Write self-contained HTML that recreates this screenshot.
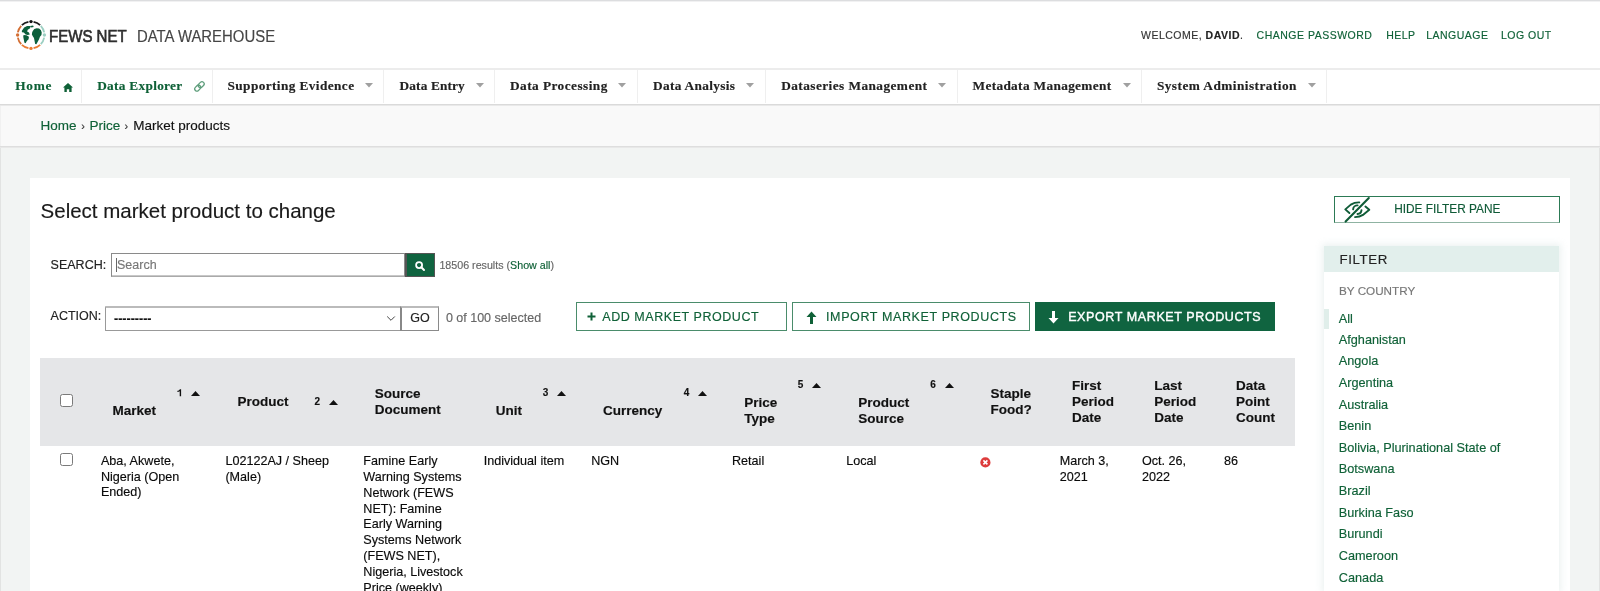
<!DOCTYPE html>
<html><head><meta charset="utf-8"><title>Select market product to change</title>
<style>
html,body{margin:0;padding:0;width:1600px;height:591px;overflow:hidden;background:#fff;position:relative}
body{font-family:'Liberation Sans', sans-serif}
.t{position:absolute;white-space:nowrap;-webkit-text-stroke:0.15px currentColor}
#w{position:absolute;left:0;top:0;width:1600px;height:591px;will-change:transform}
.r{position:absolute}
svg.r{overflow:visible}
</style></head><body><div id="w">
<div class="r" style="left:0px;top:0px;width:1600px;height:1px;background:#dcdddf"></div>
<div class="r" style="left:0px;top:1px;width:1600px;height:1px;background:#f1f1f2"></div>
<svg class="r" style="left:14.6px;top:19.3px" width="32" height="32" viewBox="0 0 32 32">
<g fill="none" stroke-width="1.8"><path d="M13.44 2.85 A13.4 13.4 0 0 0 6.86 6.20" stroke="#1c1c1c"/><path d="M25.14 6.20 A13.4 13.4 0 0 0 18.56 2.85" stroke="#1c1c1c"/><path d="M29.15 13.44 A13.4 13.4 0 0 0 25.80 6.86" stroke="#9ccfc2"/><path d="M25.80 25.14 A13.4 13.4 0 0 0 29.15 18.56" stroke="#9ccfc2"/><path d="M18.56 29.15 A13.4 13.4 0 0 0 25.14 25.80" stroke="#ea7b32"/><path d="M6.86 25.80 A13.4 13.4 0 0 0 13.44 29.15" stroke="#ea7b32"/><path d="M2.85 18.56 A13.4 13.4 0 0 0 6.20 25.14" stroke="#d46f34"/><path d="M6.20 6.86 A13.4 13.4 0 0 0 2.85 13.44" stroke="#d46f34"/></g><circle cx="16.00" cy="2.60" r="1.7" fill="#111"/><circle cx="29.40" cy="16.00" r="1.7" fill="#9ccfc2"/><circle cx="16.00" cy="29.40" r="1.7" fill="#ea7b32"/><circle cx="2.60" cy="16.00" r="1.7" fill="#d46f34"/>
<g fill="#0c5f3b" transform="translate(16 16) scale(0.98) translate(-16 -16)">
<polygon points="6.56,12.04 9.00,8.39 12.04,6.86 15.70,6.86 15.09,9.00 12.65,10.52 12.04,12.35 13.87,13.56 14.78,15.39 12.65,16.00 10.52,15.39 8.69,13.56 6.86,13.26"/>
<polygon points="8.39,16.00 11.43,16.30 13.87,17.83 13.56,20.26 11.74,22.09 10.52,24.53 9.30,23.92 8.69,20.87 8.08,17.83"/>
<polygon points="15.09,6.86 18.13,6.26 18.74,7.78 16.30,8.39"/>
<polygon points="17.83,12.04 19.35,9.91 21.79,9.00 24.22,9.30 26.05,10.82 26.96,13.56 26.66,16.00 25.14,17.83 24.22,20.26 23.00,22.70 21.48,25.44 20.26,25.14 19.65,22.09 19.05,19.05 17.83,17.22 16.91,15.39 17.22,13.26"/>
</g></svg>
<div class="t" style="left:49.30px;top:28.66px;font-size:16px;line-height:16px;color:#2e2e2e;font-weight:400;font-family:'Liberation Sans', sans-serif;transform:scaleX(0.94);transform-origin:0 0;-webkit-text-stroke:0.6px #2e2e2e;">FEWS NET</div>
<div class="t" style="left:137.00px;top:28.66px;font-size:16px;line-height:16px;color:#454545;font-weight:400;font-family:'Liberation Sans', sans-serif;transform:scaleX(0.932);transform-origin:0 0;">DATA WAREHOUSE</div>
<div class="t" style="left:1141.00px;top:30.01px;font-size:10.5px;line-height:10.5px;color:#333;font-weight:400;font-family:'Liberation Sans', sans-serif;letter-spacing:0.5px;">WELCOME, <b style="color:#222">DAVID</b>.</div>
<div class="t" style="left:1256.60px;top:30.01px;font-size:10.5px;line-height:10.5px;color:#0f6137;font-weight:400;font-family:'Liberation Sans', sans-serif;letter-spacing:0.5px;">CHANGE PASSWORD</div>
<div class="t" style="left:1386.20px;top:30.01px;font-size:10.5px;line-height:10.5px;color:#0f6137;font-weight:400;font-family:'Liberation Sans', sans-serif;letter-spacing:0.5px;">HELP</div>
<div class="t" style="left:1426.20px;top:30.01px;font-size:10.5px;line-height:10.5px;color:#0f6137;font-weight:400;font-family:'Liberation Sans', sans-serif;letter-spacing:0.5px;">LANGUAGE</div>
<div class="t" style="left:1501.00px;top:30.01px;font-size:10.5px;line-height:10.5px;color:#0f6137;font-weight:400;font-family:'Liberation Sans', sans-serif;letter-spacing:0.5px;">LOG OUT</div>
<div class="r" style="left:0px;top:68px;width:1600px;height:2px;background:#ececec"></div>
<div class="r" style="left:0px;top:104px;width:1600px;height:1px;background:#dadada"></div>
<div class="r" style="left:0px;top:105px;width:1600px;height:1px;background:#e9e9e9"></div>
<div class="r" style="left:81px;top:70px;width:1px;height:33px;background:#efefef"></div>
<div class="r" style="left:212px;top:70px;width:1px;height:33px;background:#efefef"></div>
<div class="r" style="left:383px;top:70px;width:1px;height:33px;background:#efefef"></div>
<div class="r" style="left:494px;top:70px;width:1px;height:33px;background:#efefef"></div>
<div class="r" style="left:637px;top:70px;width:1px;height:33px;background:#efefef"></div>
<div class="r" style="left:765px;top:70px;width:1px;height:33px;background:#efefef"></div>
<div class="r" style="left:957px;top:70px;width:1px;height:33px;background:#efefef"></div>
<div class="r" style="left:1141px;top:70px;width:1px;height:33px;background:#efefef"></div>
<div class="r" style="left:1326px;top:70px;width:1px;height:33px;background:#efefef"></div>
<div class="t" style="left:15.20px;top:79.16px;font-size:13.3px;line-height:13.3px;color:#0f6137;font-weight:700;font-family:'Liberation Serif', serif;letter-spacing:0.75px;">Home</div>
<svg class="r" style="left:63px;top:82.5px" width="10" height="9" viewBox="0 0 10 9"><path d="M5 0 L10 4.6 L8.6 4.6 L8.6 9 L6.2 9 L6.2 6.2 L3.8 6.2 L3.8 9 L1.4 9 L1.4 4.6 L0 4.6 Z" fill="#0f6137"/></svg>
<div class="t" style="left:97.20px;top:79.16px;font-size:13.3px;line-height:13.3px;color:#0f6137;font-weight:700;font-family:'Liberation Serif', serif;letter-spacing:0.3px;">Data Explorer</div>
<svg class="r" style="left:194px;top:81px" width="11" height="11" viewBox="0 0 11 11"><g fill="none" stroke="#5f9e7c" stroke-width="1.25"><rect x="0.4" y="4.9" width="6.6" height="4.4" rx="2.2" transform="rotate(-45 3.7 7.1)"/><rect x="3.9" y="1.5" width="6.6" height="4.4" rx="2.2" transform="rotate(-45 7.2 3.7)"/></g></svg>
<div class="t" style="left:227.50px;top:79.16px;font-size:13.3px;line-height:13.3px;color:#222;font-weight:700;font-family:'Liberation Serif', serif;letter-spacing:0.4px;">Supporting Evidence</div>
<svg class="r" style="left:365px;top:83px" width="8" height="5" viewBox="0 0 8 5"><path d="M0 0 L8 0 L4 4.5 Z" fill="#a0a0a0"/></svg>
<div class="t" style="left:399.50px;top:79.16px;font-size:13.3px;line-height:13.3px;color:#222;font-weight:700;font-family:'Liberation Serif', serif;letter-spacing:0.15px;">Data Entry</div>
<svg class="r" style="left:475.5px;top:83px" width="8" height="5" viewBox="0 0 8 5"><path d="M0 0 L8 0 L4 4.5 Z" fill="#a0a0a0"/></svg>
<div class="t" style="left:510.00px;top:79.16px;font-size:13.3px;line-height:13.3px;color:#222;font-weight:700;font-family:'Liberation Serif', serif;letter-spacing:0.45px;">Data Processing</div>
<svg class="r" style="left:618px;top:83px" width="8" height="5" viewBox="0 0 8 5"><path d="M0 0 L8 0 L4 4.5 Z" fill="#a0a0a0"/></svg>
<div class="t" style="left:653.00px;top:79.16px;font-size:13.3px;line-height:13.3px;color:#222;font-weight:700;font-family:'Liberation Serif', serif;letter-spacing:0.33px;">Data Analysis</div>
<svg class="r" style="left:745.5px;top:83px" width="8" height="5" viewBox="0 0 8 5"><path d="M0 0 L8 0 L4 4.5 Z" fill="#a0a0a0"/></svg>
<div class="t" style="left:781.20px;top:79.16px;font-size:13.3px;line-height:13.3px;color:#222;font-weight:700;font-family:'Liberation Serif', serif;letter-spacing:0.44px;">Dataseries Management</div>
<svg class="r" style="left:938px;top:83px" width="8" height="5" viewBox="0 0 8 5"><path d="M0 0 L8 0 L4 4.5 Z" fill="#a0a0a0"/></svg>
<div class="t" style="left:972.50px;top:79.16px;font-size:13.3px;line-height:13.3px;color:#222;font-weight:700;font-family:'Liberation Serif', serif;letter-spacing:0.34px;">Metadata Management</div>
<svg class="r" style="left:1122.5px;top:83px" width="8" height="5" viewBox="0 0 8 5"><path d="M0 0 L8 0 L4 4.5 Z" fill="#a0a0a0"/></svg>
<div class="t" style="left:1156.90px;top:79.16px;font-size:13.3px;line-height:13.3px;color:#222;font-weight:700;font-family:'Liberation Serif', serif;letter-spacing:0.46px;">System Administration</div>
<svg class="r" style="left:1307.5px;top:83px" width="8" height="5" viewBox="0 0 8 5"><path d="M0 0 L8 0 L4 4.5 Z" fill="#a0a0a0"/></svg>
<div class="r" style="left:0px;top:106px;width:1600px;height:40px;background:#f9f9f9"></div>
<div class="r" style="left:0px;top:106px;width:1px;height:40px;background:#f1f1f1"></div>
<div class="r" style="left:1599px;top:106px;width:1px;height:40px;background:#f1f1f1"></div>
<div class="r" style="left:0px;top:146px;width:1600px;height:1px;background:#dedede"></div>
<div class="r" style="left:0px;top:147px;width:1600px;height:1px;background:#e8e8e8"></div>
<div class="t" style="left:40.60px;top:119.37px;font-size:13.5px;line-height:13.5px;color:#0f6137;font-weight:400;font-family:'Liberation Sans', sans-serif;">Home</div>
<div class="t" style="left:81.30px;top:121.49px;font-size:11px;line-height:11px;color:#333;font-weight:400;font-family:'Liberation Sans', sans-serif;">&rsaquo;</div>
<div class="t" style="left:89.60px;top:119.37px;font-size:13.5px;line-height:13.5px;color:#0f6137;font-weight:400;font-family:'Liberation Sans', sans-serif;">Price</div>
<div class="t" style="left:124.60px;top:121.49px;font-size:11px;line-height:11px;color:#333;font-weight:400;font-family:'Liberation Sans', sans-serif;">&rsaquo;</div>
<div class="t" style="left:133.30px;top:119.37px;font-size:13.5px;line-height:13.5px;color:#111;font-weight:400;font-family:'Liberation Sans', sans-serif;">Market products</div>
<div class="r" style="left:0px;top:148px;width:1600px;height:443px;background:#f2f4f3"></div>
<div class="r" style="left:0px;top:148px;width:1px;height:443px;background:#e2e3e2"></div>
<div class="r" style="left:1599px;top:148px;width:1px;height:443px;background:#e2e3e2"></div>
<div class="r" style="left:30px;top:178px;width:1540px;height:413px;background:#fff"></div>
<div class="t" style="left:40.60px;top:200.65px;font-size:20.5px;line-height:20.5px;color:#1a1a1a;font-weight:400;font-family:'Liberation Sans', sans-serif;">Select market product to change</div>
<div class="t" style="left:50.60px;top:258.82px;font-size:12.5px;line-height:12.5px;color:#222;font-weight:400;font-family:'Liberation Sans', sans-serif;">SEARCH:</div>
<div class="r" style="left:111px;top:253px;width:294px;height:24px;background:#fff;border:1px solid #8a8a8a;border-bottom-color:#aaa;box-sizing:border-box;box-shadow:inset 0 -1px 0 #c8c8c8"></div>
<div class="r" style="left:116.3px;top:258px;width:0.8px;height:14px;background:#666"></div>
<div class="t" style="left:117.00px;top:258.82px;font-size:12.5px;line-height:12.5px;color:#777;font-weight:400;font-family:'Liberation Sans', sans-serif;">Search</div>
<div class="r" style="left:405px;top:253px;width:30px;height:24px;background:#106440;border:1px solid #555;border-left:2px solid #555;box-sizing:border-box"></div>
<svg class="r" style="left:415px;top:261px" width="10" height="10" viewBox="0 0 10 10"><circle cx="4.1" cy="4.1" r="3" fill="none" stroke="#fff" stroke-width="1.8"/><path d="M6.3 6.3 L9 9" stroke="#fff" stroke-width="2" stroke-linecap="round"/></svg>
<div class="t" style="left:439.40px;top:260.34px;font-size:10.7px;line-height:10.7px;color:#666;font-weight:400;font-family:'Liberation Sans', sans-serif;">18506 results (<span style="color:#0f6137">Show all</span>)</div>
<div class="t" style="left:50.60px;top:310.32px;font-size:12.5px;line-height:12.5px;color:#222;font-weight:400;font-family:'Liberation Sans', sans-serif;">ACTION:</div>
<div class="r" style="left:105px;top:306px;width:296px;height:24.6px;background:#fff;border:1px solid #999;border-top:2px solid #bbb;box-sizing:border-box;border-radius:1px"></div>
<div class="t" style="left:114.00px;top:312.92px;font-size:12.5px;line-height:12.5px;color:#111;font-weight:700;font-family:'Liberation Sans', sans-serif;">---------</div>
<svg class="r" style="left:386px;top:315px" width="10" height="7" viewBox="0 0 10 7"><path d="M1.2 1.5 L5 5.3 L8.8 1.5" fill="none" stroke="#444" stroke-width="1"/></svg>
<div class="r" style="left:399.5px;top:306px;width:39.5px;height:24.6px;background:#fff;border:1px solid #8a8a8a;border-top:2px solid #bbb;border-left:2px solid #888;box-sizing:border-box"></div>
<div class="t" style="left:410.20px;top:311.82px;font-size:12.5px;line-height:12.5px;color:#222;font-weight:400;font-family:'Liberation Sans', sans-serif;">GO</div>
<div class="t" style="left:445.90px;top:311.52px;font-size:12.5px;line-height:12.5px;color:#666;font-weight:400;font-family:'Liberation Sans', sans-serif;">0 of 100 selected</div>
<div class="r" style="left:575.5px;top:302.3px;width:211.5px;height:29px;border:1.5px solid #4a8c6b;box-sizing:border-box;background:#fff"></div>
<div class="t" style="left:602.30px;top:310.72px;font-size:12.5px;line-height:12.5px;color:#0f6137;font-weight:400;font-family:'Liberation Sans', sans-serif;letter-spacing:0.55px;">ADD MARKET PRODUCT</div>
<svg class="r" style="left:587px;top:312px" width="9" height="9" viewBox="0 0 9 9"><path d="M4.5 0.5 V8.5 M0.5 4.5 H8.5" stroke="#0f6137" stroke-width="2"/></svg>
<div class="r" style="left:792px;top:302.3px;width:237.5px;height:29px;border:1.5px solid #4a8c6b;box-sizing:border-box;background:#fff"></div>
<div class="t" style="left:826.00px;top:310.72px;font-size:12.5px;line-height:12.5px;color:#0f6137;font-weight:400;font-family:'Liberation Sans', sans-serif;letter-spacing:0.62px;">IMPORT MARKET PRODUCTS</div>
<svg class="r" style="left:806px;top:311px" width="11" height="13" viewBox="0 0 11 13"><path d="M5.5 0.5 L10.5 6 L7 6 L7 13 L4 13 L4 6 L0.5 6 Z" fill="#0f6137"/></svg>
<div class="r" style="left:1034.5px;top:302.3px;width:240.5px;height:29px;background:#106440"></div>
<div class="t" style="left:1068.20px;top:310.52px;font-size:12.5px;line-height:12.5px;color:#fff;font-weight:400;font-family:'Liberation Sans', sans-serif;letter-spacing:0.6px;-webkit-text-stroke:0.4px #fff;">EXPORT MARKET PRODUCTS</div>
<svg class="r" style="left:1048px;top:311px" width="11" height="13" viewBox="0 0 11 13"><path d="M5.5 12.5 L10.5 7 L7 7 L7 0 L4 0 L4 7 L0.5 7 Z" fill="#fff"/></svg>
<div class="r" style="left:1334px;top:196px;width:226px;height:27px;border:1.3px solid #2c7a55;border-bottom:1.5px solid #8fb3a2;box-sizing:border-box"></div>
<svg class="r" style="left:1340px;top:194px" width="36" height="32" viewBox="0 0 36 32"><g fill="none" stroke="#0f5c37" stroke-width="1.9" stroke-linecap="round" stroke-linejoin="round">
<path d="M19.3 8.4 Q14.5 8.3 10.8 10.6 L5.3 15.4 L9.4 19"/>
<path d="M25.4 12.5 L29.3 15.8 L23.5 20.6 Q19.5 23.1 15 23.1"/>
<path d="M17.6 11.4 A4.3 4.3 0 0 0 13.1 15.4"/>
<path d="M21.5 16.1 A4.3 4.3 0 0 1 17.5 20"/>
<path d="M5.6 27.6 L28.8 4.1" stroke-width="2.1"/></g></svg>
<div class="t" style="left:1394.20px;top:203.57px;font-size:11.85px;line-height:11.85px;color:#0f5a37;font-weight:400;font-family:'Liberation Sans', sans-serif;">HIDE FILTER PANE</div>
<div class="r" style="left:1324px;top:246px;width:235px;height:345px;background:#fff;box-shadow:0 0 7px 2px rgba(150,185,175,0.18)"></div>
<div class="r" style="left:1324px;top:246px;width:235px;height:26px;background:#e2efec"></div>
<div class="t" style="left:1339.50px;top:252.84px;font-size:13.3px;line-height:13.3px;color:#222;font-weight:400;font-family:'Liberation Sans', sans-serif;letter-spacing:0.6px;">FILTER</div>
<div class="t" style="left:1339.00px;top:285.00px;font-size:11.7px;line-height:11.7px;color:#777;font-weight:400;font-family:'Liberation Sans', sans-serif;">BY COUNTRY</div>
<div class="r" style="left:1324px;top:308.5px;width:4.5px;height:20.5px;background:#e0eeea"></div>
<div class="t" style="left:1338.80px;top:312.65px;font-size:12.7px;line-height:12.7px;color:#0f6137;font-weight:400;font-family:'Liberation Sans', sans-serif;">All</div>
<div class="t" style="left:1338.80px;top:333.75px;font-size:12.7px;line-height:12.7px;color:#0f6137;font-weight:400;font-family:'Liberation Sans', sans-serif;">Afghanistan</div>
<div class="t" style="left:1338.80px;top:355.37px;font-size:12.7px;line-height:12.7px;color:#0f6137;font-weight:400;font-family:'Liberation Sans', sans-serif;">Angola</div>
<div class="t" style="left:1338.80px;top:376.99px;font-size:12.7px;line-height:12.7px;color:#0f6137;font-weight:400;font-family:'Liberation Sans', sans-serif;">Argentina</div>
<div class="t" style="left:1338.80px;top:398.61px;font-size:12.7px;line-height:12.7px;color:#0f6137;font-weight:400;font-family:'Liberation Sans', sans-serif;">Australia</div>
<div class="t" style="left:1338.80px;top:420.23px;font-size:12.7px;line-height:12.7px;color:#0f6137;font-weight:400;font-family:'Liberation Sans', sans-serif;">Benin</div>
<div class="t" style="left:1338.80px;top:441.85px;font-size:12.7px;line-height:12.7px;color:#0f6137;font-weight:400;font-family:'Liberation Sans', sans-serif;">Bolivia, Plurinational State of</div>
<div class="t" style="left:1338.80px;top:463.47px;font-size:12.7px;line-height:12.7px;color:#0f6137;font-weight:400;font-family:'Liberation Sans', sans-serif;">Botswana</div>
<div class="t" style="left:1338.80px;top:485.09px;font-size:12.7px;line-height:12.7px;color:#0f6137;font-weight:400;font-family:'Liberation Sans', sans-serif;">Brazil</div>
<div class="t" style="left:1338.80px;top:506.71px;font-size:12.7px;line-height:12.7px;color:#0f6137;font-weight:400;font-family:'Liberation Sans', sans-serif;">Burkina Faso</div>
<div class="t" style="left:1338.80px;top:528.33px;font-size:12.7px;line-height:12.7px;color:#0f6137;font-weight:400;font-family:'Liberation Sans', sans-serif;">Burundi</div>
<div class="t" style="left:1338.80px;top:549.95px;font-size:12.7px;line-height:12.7px;color:#0f6137;font-weight:400;font-family:'Liberation Sans', sans-serif;">Cameroon</div>
<div class="t" style="left:1338.80px;top:571.57px;font-size:12.7px;line-height:12.7px;color:#0f6137;font-weight:400;font-family:'Liberation Sans', sans-serif;">Canada</div>
<div class="r" style="left:40px;top:358px;width:1254.5px;height:87.5px;background:#e5e6e8"></div>
<div class="r" style="left:60px;top:393.5px;width:13px;height:13px;background:#fff;border:1px solid #7a7a7a;border-radius:2.5px;box-sizing:border-box"></div>
<div class="t" style="left:112.60px;top:404.27px;font-size:13.5px;line-height:13.5px;color:#111;font-weight:700;font-family:'Liberation Sans', sans-serif;">Market</div>
<div class="t" style="left:237.50px;top:395.27px;font-size:13.5px;line-height:13.5px;color:#111;font-weight:700;font-family:'Liberation Sans', sans-serif;">Product</div>
<div class="t" style="left:374.70px;top:386.37px;font-size:13.5px;line-height:15.7px;color:#111;font-weight:700;font-family:'Liberation Sans', sans-serif;">Source<br>Document</div>
<div class="t" style="left:495.80px;top:404.17px;font-size:13.5px;line-height:13.5px;color:#111;font-weight:700;font-family:'Liberation Sans', sans-serif;">Unit</div>
<div class="t" style="left:603.10px;top:404.17px;font-size:13.5px;line-height:13.5px;color:#111;font-weight:700;font-family:'Liberation Sans', sans-serif;">Currency</div>
<div class="t" style="left:744.20px;top:394.82px;font-size:13.5px;line-height:16px;color:#111;font-weight:700;font-family:'Liberation Sans', sans-serif;">Price<br>Type</div>
<div class="t" style="left:858.30px;top:394.82px;font-size:13.5px;line-height:16px;color:#111;font-weight:700;font-family:'Liberation Sans', sans-serif;">Product<br>Source</div>
<div class="t" style="left:990.60px;top:386.32px;font-size:13.5px;line-height:16px;color:#111;font-weight:700;font-family:'Liberation Sans', sans-serif;">Staple<br>Food?</div>
<div class="t" style="left:1072.10px;top:378.12px;font-size:13.5px;line-height:16px;color:#111;font-weight:700;font-family:'Liberation Sans', sans-serif;">First<br>Period<br>Date</div>
<div class="t" style="left:1154.20px;top:378.12px;font-size:13.5px;line-height:16px;color:#111;font-weight:700;font-family:'Liberation Sans', sans-serif;">Last<br>Period<br>Date</div>
<div class="t" style="left:1236.10px;top:378.12px;font-size:13.5px;line-height:16px;color:#111;font-weight:700;font-family:'Liberation Sans', sans-serif;">Data<br>Point<br>Count</div>
<svg class="r" style="left:176.9px;top:389.0px" width="5" height="8" viewBox="0 0 5 8"><path d="M2.9 0.2 L4.1 0.2 L4.1 7.2 L2.7 7.2 L2.7 2.2 C2.2 2.7 1.3 2.9 0.4 2.9 L0.4 1.8 C1.6 1.7 2.5 1.1 2.9 0.2 Z" fill="#111"/></svg>
<svg class="r" style="left:191.2px;top:391.3px" width="9" height="5" viewBox="0 0 9 5"><path d="M0 5 L4.5 0 L9 5 Z" fill="#111"/></svg>
<div class="t" style="left:314.50px;top:397.14px;font-size:10px;line-height:10px;color:#111;font-weight:700;font-family:'Liberation Sans', sans-serif;">2</div>
<svg class="r" style="left:329px;top:400.3px" width="9" height="5" viewBox="0 0 9 5"><path d="M0 5 L4.5 0 L9 5 Z" fill="#111"/></svg>
<div class="t" style="left:542.70px;top:387.74px;font-size:10px;line-height:10px;color:#111;font-weight:700;font-family:'Liberation Sans', sans-serif;">3</div>
<svg class="r" style="left:557px;top:391.3px" width="9" height="5" viewBox="0 0 9 5"><path d="M0 5 L4.5 0 L9 5 Z" fill="#111"/></svg>
<div class="t" style="left:683.70px;top:387.74px;font-size:10px;line-height:10px;color:#111;font-weight:700;font-family:'Liberation Sans', sans-serif;">4</div>
<svg class="r" style="left:698px;top:391.3px" width="9" height="5" viewBox="0 0 9 5"><path d="M0 5 L4.5 0 L9 5 Z" fill="#111"/></svg>
<div class="t" style="left:797.80px;top:379.94px;font-size:10px;line-height:10px;color:#111;font-weight:700;font-family:'Liberation Sans', sans-serif;">5</div>
<svg class="r" style="left:812px;top:383.2px" width="9" height="5" viewBox="0 0 9 5"><path d="M0 5 L4.5 0 L9 5 Z" fill="#111"/></svg>
<div class="t" style="left:930.20px;top:379.94px;font-size:10px;line-height:10px;color:#111;font-weight:700;font-family:'Liberation Sans', sans-serif;">6</div>
<svg class="r" style="left:944.7px;top:383.2px" width="9" height="5" viewBox="0 0 9 5"><path d="M0 5 L4.5 0 L9 5 Z" fill="#111"/></svg>
<div class="r" style="left:60px;top:453px;width:13px;height:13px;background:#fff;border:1px solid #7a7a7a;border-radius:2.5px;box-sizing:border-box"></div>
<div class="t" style="left:100.90px;top:453.71px;font-size:12.6px;line-height:15.85px;color:#0a0a0a;font-weight:400;font-family:'Liberation Sans', sans-serif;">Aba, Akwete,<br>Nigeria (Open<br>Ended)</div>
<div class="t" style="left:225.40px;top:453.71px;font-size:12.6px;line-height:15.85px;color:#0a0a0a;font-weight:400;font-family:'Liberation Sans', sans-serif;">L02122AJ / Sheep<br>(Male)</div>
<div class="t" style="left:363.30px;top:454.01px;font-size:12.6px;line-height:15.85px;color:#0a0a0a;font-weight:400;font-family:'Liberation Sans', sans-serif;">Famine Early<br>Warning Systems<br>Network (FEWS<br>NET): Famine<br>Early Warning<br>Systems Network<br>(FEWS NET),<br>Nigeria, Livestock<br>Price (weekly)</div>
<div class="t" style="left:483.70px;top:453.71px;font-size:12.6px;line-height:15.85px;color:#0a0a0a;font-weight:400;font-family:'Liberation Sans', sans-serif;">Individual item</div>
<div class="t" style="left:591.20px;top:453.71px;font-size:12.6px;line-height:15.85px;color:#0a0a0a;font-weight:400;font-family:'Liberation Sans', sans-serif;">NGN</div>
<div class="t" style="left:732.00px;top:453.71px;font-size:12.6px;line-height:15.85px;color:#0a0a0a;font-weight:400;font-family:'Liberation Sans', sans-serif;">Retail</div>
<div class="t" style="left:846.20px;top:453.71px;font-size:12.6px;line-height:15.85px;color:#0a0a0a;font-weight:400;font-family:'Liberation Sans', sans-serif;">Local</div>
<svg class="r" style="left:979.5px;top:456.5px" width="11" height="11" viewBox="0 0 11 11"><circle cx="5.4" cy="5.4" r="5.1" fill="#dd3c3c"/><path d="M3.4 3.4 L7.4 7.4 M7.4 3.4 L3.4 7.4" stroke="#fff" stroke-width="1.6"/></svg>
<div class="t" style="left:1059.70px;top:453.71px;font-size:12.6px;line-height:15.85px;color:#0a0a0a;font-weight:400;font-family:'Liberation Sans', sans-serif;">March 3,<br>2021</div>
<div class="t" style="left:1141.90px;top:453.71px;font-size:12.6px;line-height:15.85px;color:#0a0a0a;font-weight:400;font-family:'Liberation Sans', sans-serif;">Oct. 26,<br>2022</div>
<div class="t" style="left:1224.00px;top:453.71px;font-size:12.6px;line-height:15.85px;color:#0a0a0a;font-weight:400;font-family:'Liberation Sans', sans-serif;">86</div>
</div></body></html>
